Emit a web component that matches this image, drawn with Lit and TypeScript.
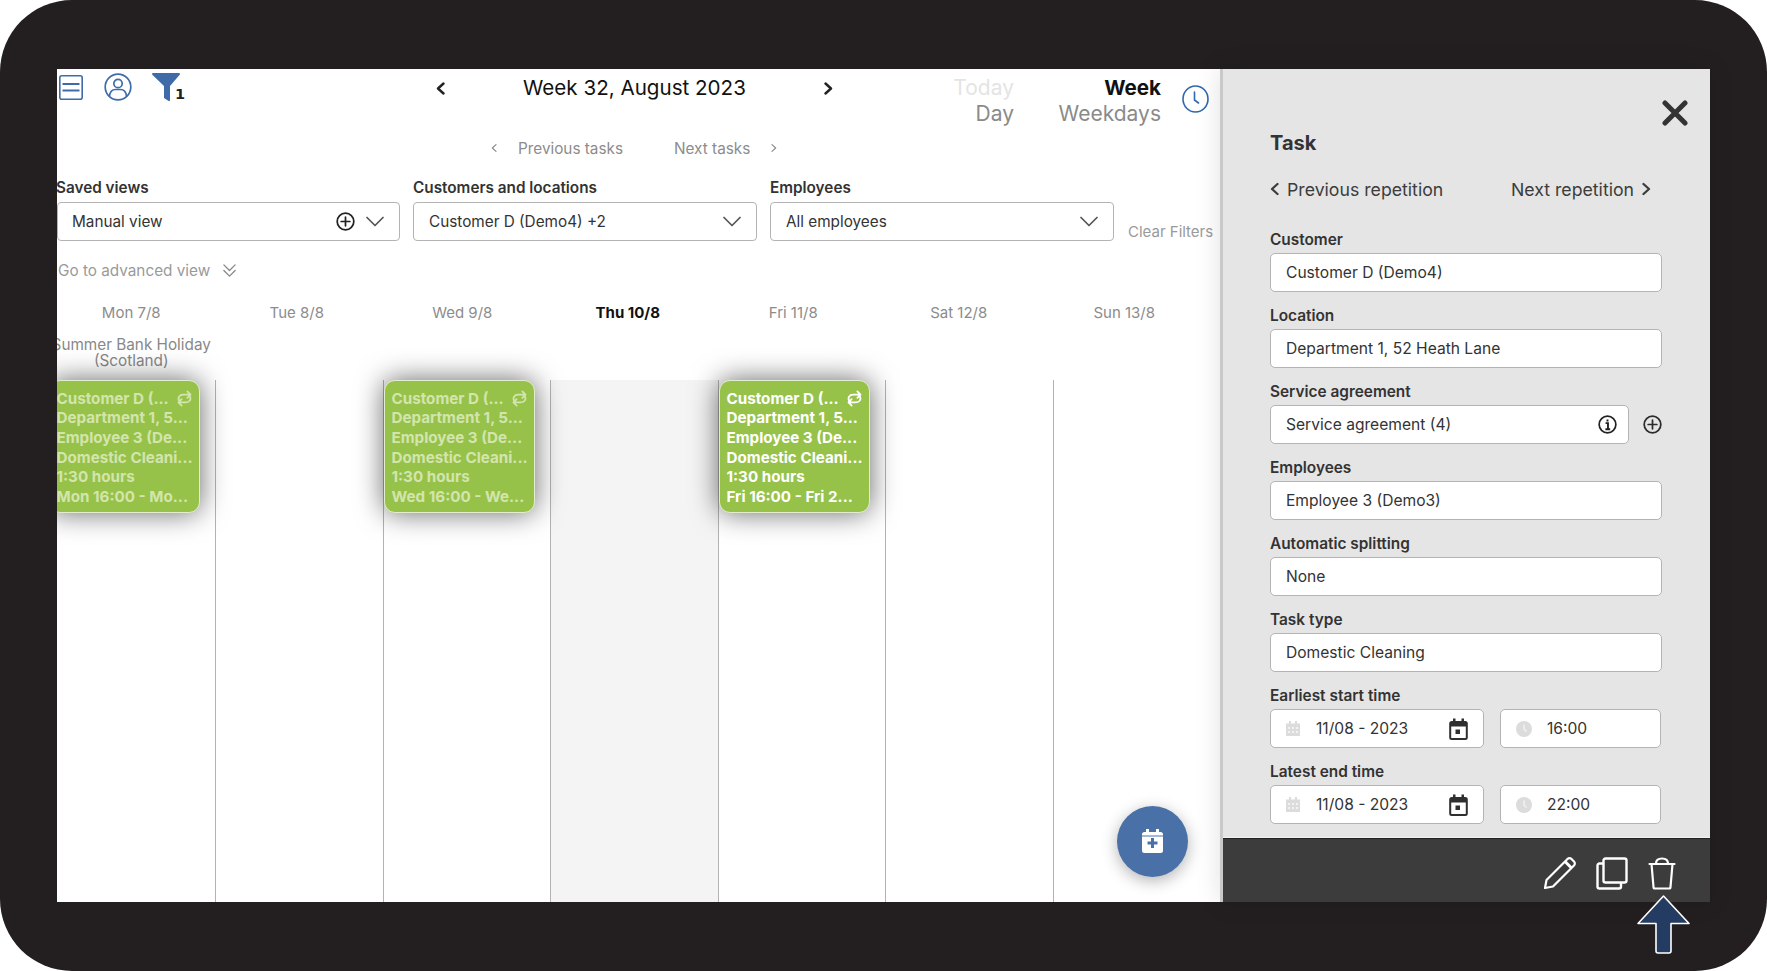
import { LitElement, html, css } from "lit";
import { customElement } from "lit/decorators.js";

const chev = (dir: "l" | "r" | "d", cls = "") => {
  if (dir === "d") {
    return html`<svg class=${cls} viewBox="0 0 18 11" fill="none" stroke="currentColor" stroke-linecap="round" stroke-linejoin="round"><path d="M1 1.500l8 8 8-8"></path></svg>`;
  }
  return html`<svg class=${cls} viewBox="0 0 9 13" fill="none" stroke="currentColor" stroke-linecap="round" stroke-linejoin="round"><path d=${dir === "l" ? "M7.500 1.500 2 6.500l5.500 5" : "M1.500 1.500 7 6.500l-5.500 5"}></path></svg>`;
};

const plus = (cls: string) => html`<svg class=${cls} viewBox="0 0 24 24" fill="none" stroke="currentColor" stroke-width="2.200" stroke-linecap="round"><circle cx="12" cy="12" r="10.500"></circle><path d="M12 6.500v11M6.500 12h11"></path></svg>`;

const repeat = html`<svg class="rep" viewBox="0 0 24 24" fill="none" stroke="currentColor" stroke-width="2.500" stroke-linecap="round" stroke-linejoin="round">
  <path d="M5 16C1.500 11 5 6.500 10 6.500h10.500M16 2l4.500 4.500L16 11"></path><path d="M19 8c3.500 5 0 9.500-5 9.500H3.500M8 13l-4.500 4.500L8 22"></path></svg>`;

const calGrey = html`<svg class="ic-grey" viewBox="0 0 14 15" fill="#dcdcdc"><path d="M0 2.500h14V15H0zM3 0h2v3H3zM9 0h2v3H9z"></path><g fill="#f2f2f2"><rect x="2" y="6" width="2" height="2"></rect><rect x="6" y="6" width="2" height="2"></rect><rect x="10" y="6" width="2" height="2"></rect><rect x="2" y="10" width="2" height="2"></rect><rect x="6" y="10" width="2" height="2"></rect><rect x="10" y="10" width="2" height="2"></rect></g></svg>`;
const calDark = html`<svg class="ic-cal" viewBox="0 0 19 22" fill="none"><path d="M1.200 5.500a1.500 1.500 0 0 1 1.500-1.500h13.600a1.500 1.500 0 0 1 1.500 1.500v14a1.500 1.500 0 0 1-1.500 1.500H2.700a1.500 1.500 0 0 1-1.500-1.500z" stroke="#2f2f2f" stroke-width="2"></path><path d="M1 4h17v4.500H1zM4 0.500h2.500V5H4zM12.500 0.500H15V5h-2.500zM6.500 11.500h4.500V16H6.500z" fill="#2f2f2f"></path></svg>`;
const clockGrey = html`<svg class="ic-clock" viewBox="0 0 16 16"><circle cx="8" cy="8" r="8" fill="#dcdcdc"></circle><path d="M8 3.500V8l2.500 2.500" fill="none" stroke="#f4f4f4" stroke-width="1.300"></path></svg>`;

interface CardData { day: string; last: string; active?: boolean; }
const cards: (CardData | null)[] = [
  { day: "Mon", last: "Mon 16:00 - Mo..." },
  null,
  { day: "Wed", last: "Wed 16:00 - We..." },
  null,
  { day: "Fri", last: "Fri 16:00 - Fri 2...", active: true },
  null,
  null,
];
const days = ["Mon 7/8", "Tue 8/8", "Wed 9/8", "Thu 10/8", "Fri 11/8", "Sat 12/8", "Sun 13/8"];

@customElement("app-root")
export class AppRoot extends LitElement {
  static styles = css`
    :host { display: block; width: 1767px; height: 971px; background: #fff; font-family: "Inter", "Noto Sans", sans-serif; color: #333; overflow: hidden; }
    * { box-sizing: border-box; }
    svg { display: block; flex: none; }
    .frame { position: relative; width: 1767px; height: 971px; background: #231f20; border-radius: 72px; padding: 69px 57px 69px 57px; }
    .screen { display: flex; height: 833px; width: 1653px; background: #fff; }
    .main { position: relative; width: 1163px; height: 833px; overflow: hidden; background: #fff; flex: none; }
    .top { display: flex; height: 58px; align-items: flex-start; }
    .icons { display: flex; width: 150px; height: 58px; padding: 4px 0 0 2px; position: relative; }
    .ham { width: 24px; height: 25px; margin-top: 2px; color: #3f6ca8; }
    .user { width: 28px; height: 28px; margin-left: 21px; color: #3f6ca8; }
    .filter { width: 28px; height: 28px; margin-left: 20px; }
    .badge { position: absolute; left: 118px; top: 17px; font-family: "DejaVu Sans", sans-serif; font-size: 14.500px; font-weight: 700; color: #222; }
    .nav { display: flex; align-items: center; width: 397px; margin-left: 229px; height: 38px; }
    .nav svg { width: 9px; height: 13px; stroke-width: 2.400; color: #222; }
    .nav .tt { font-size: 20.600px; color: #111; white-space: nowrap; text-align: center; flex: 1; margin-top: -1px; }
    .sw { display: grid; grid-template-columns: 118px 147px; justify-items: end; font-size: 21px; line-height: 26px; color: #8a8a8a; padding-top: 6px; margin-left: 63px; }
    .sw .off { color: #e4e4e4; }
    .sw .on { color: #111; font-weight: 700; font-size: 20.600px; }
    .clk { width: 27px; height: 28px; margin: 16px 0 0 21px; color: #3068ad; }

    .pager { display: flex; height: 42px; align-items: center; font-size: 15.300px; color: #8c8c8c; }
    .pager svg { width: 6px; height: 10px; stroke-width: 1.800; }
    .pager .a { margin-left: 434px; }
    .pager .pt { margin-left: 21px; width: 156px; white-space: nowrap; }
    .pager .nt { width: 97px; white-space: nowrap; }

    .filters { display: flex; gap: 13px; margin-top: 7px; height: 65px; }
    .fl { width: 344px; }
    .fl.first { margin-left: -1px; }
    .fl label { display: block; font-size: 15.300px; font-weight: 600; color: #333; height: 26px; line-height: 24px; white-space: nowrap; }
    .sel { display: flex; align-items: center; height: 39px; border: 1.500px solid #b4b4b4; border-radius: 4px; padding: 0 15px 0 15px; font-size: 15.300px; color: #333; background: #fff; }
    .fl.first .sel { margin-left: 1px; padding-left: 14px; }
    .sel span { flex: 1; white-space: nowrap; }
    .sel .dn { width: 18px; height: 11px; stroke-width: 1.700; color: #555; }
    .sel .pl { width: 19px; height: 19px; color: #222; margin-right: 11px; }
    .clear { font-size: 15px; color: #9a9a9a; margin: 46px 0 0 1px; white-space: nowrap; }

    .adv { display: flex; align-items: center; height: 20px; margin-top: 19px; font-size: 15.300px; color: #9a9a9a; padding-left: 1px; }
    .adv svg { width: 15px; height: 15px; margin-left: 12px; color: #888; }

    .heads { display: grid; grid-template-columns: repeat(7, 165.500px); margin: 24px 0 0 -8.500px; font-size: 15px; color: #8c8c8c; text-align: center; height: 18px; line-height: 18px; }
    .heads .today { color: #111; font-weight: 700; }
    .hol { width: 165.500px; margin: 15px 0 0 -8.500px; height: 32px; font-size: 15.300px; line-height: 16px; text-align: center; color: #888; white-space: nowrap; }

    .grid { display: grid; grid-template-columns: repeat(7, 167.500px); margin: 11px 0 0 -8.500px; height: 522px; }
    .col { border-right: 1.500px solid #b3b3b3; height: 100%; }
    .col.today { background: #f4f4f4; }
    .col:last-child { border-right: none; }
    .card { width: 151px; height: 133px; background: #96c249; border: 1.500px solid #e3eccf; border-radius: 11px; box-shadow: 0 0 28px rgba(0,0,0,.6); padding: 7.500px 6px 0 7px; color: #d3e5ad; font-size: 15.200px; font-weight: 700; line-height: 19.700px; white-space: nowrap; position: relative; overflow: hidden; }
    .card.active { color: #fff; }
    .card .r1 { display: flex; justify-content: space-between; align-items: center; }
    .rep { width: 17px; height: 17px; }

    .fab { position: absolute; left: 1059.500px; top: 737px; width: 71px; height: 71px; border-radius: 50%; background: #4a70a8; box-shadow: 0 4px 16px rgba(0,0,0,.3); display: flex; align-items: center; justify-content: center; }
    .fab svg { width: 21px; height: 24px; margin-top: -2px; }

    .panel { position: relative; width: 490px; height: 833px; background: #e5e5e5; border-left: 3px solid #c9c9c9; box-shadow: 0 0 24px rgba(0,0,0,.12); flex: none; display: flex; flex-direction: column; }
    .pbody { flex: 1; padding: 0 0 0 47px; position: relative; }
    .x { position: absolute; right: 22px; top: 31px; width: 26px; height: 26px; }
    .ptitle { font-size: 20px; font-weight: 700; color: #333; margin-top: 61px; height: 26px; line-height: 26px; }
    .rep-nav { display: flex; align-items: center; height: 24px; margin-top: 21px; font-size: 17.700px; color: #3c3c3c; white-space: nowrap; }
    .rep-nav svg { width: 9px; height: 14px; stroke-width: 2.300; }
    .rep-nav .p { margin-left: 8px; width: 224px; }
    .rep-nav .n { width: 131px; }
    .rows { margin-top: 26px; }
    .field { height: 76px; }
    .field label { display: block; height: 26px; line-height: 26px; font-size: 15.400px; font-weight: 600; color: #333; white-space: nowrap; }
    .inp { display: flex; align-items: center; width: 392px; height: 39px; background: #fff; border: 1.500px solid #b4b4b4; border-radius: 5px; padding-left: 15px; font-size: 15.600px; color: #333; white-space: nowrap; }
    .row { display: flex; align-items: center; }
    .inp.sa { width: 359px; padding-right: 11px; justify-content: space-between; }
    .info { width: 19px; height: 19px; }
    .addp { width: 19px; height: 19px; margin-left: 14px; color: #2b2b2b; }
    .date { width: 214px; padding-left: 15px; }
    .date .tx { margin-left: 16px; flex: 1; }
    .ic-grey { width: 14px; height: 15px; }
    .ic-cal { width: 19px; height: 22px; margin-right: 15px; }
    .time { width: 161px; margin-left: 16px; padding-left: 15px; }
    .time .tx { margin-left: 15px; }
    .ic-clock { width: 16px; height: 16px; }
    .foot { height: 64px; flex: none; background: #3c3c3c; border-top: 1.500px solid #222; box-shadow: 0 -1px 0 #f2f2f2; display: flex; justify-content: flex-end; padding: 18px 34px 0 0; gap: 20px; }
    .foot svg { height: 33px; }
    .arrow { position: absolute; left: 1637px; top: 895px; width: 53px; height: 59px; }
  `;

  render() {
    return html`<div class="frame">
      <div class="screen">
        <div class="main">
          <div class="top">
            <div class="icons">
              <svg class="ham" viewBox="0 0 24 25" fill="none" stroke="currentColor" stroke-width="1.600"><rect x=".8" y=".8" width="22.400" height="23.400" rx="2"></rect><path d="M3.500 9h17M3.500 15.500h17" stroke-width="2"></path></svg>
              <svg class="user" viewBox="0 0 28 28" fill="none" stroke="currentColor" stroke-width="1.700"><circle cx="14" cy="14" r="12.800"></circle><circle cx="14" cy="10.500" r="4.200"></circle><path d="M5.500 23c.5-4 3-6.500 6-6.500h5c3 0 5.500 2.500 6 6.500"></path></svg>
              <svg class="filter" viewBox="0 0 28 28" fill="#3f6ca8"><path d="M1 0h26a1 1 0 0 1 .7 1.700L18 13v14a1 1 0 0 1-1.400.9L12 25V13L.3 1.700A1 1 0 0 1 1 0z"></path></svg>
              <span class="badge">1</span>
            </div>
            <div class="nav">${chev("l")}<span class="tt">Week 32, August 2023</span>${chev("r")}</div>
            <div class="sw">
              <span class="off">Today</span><span class="on">Week</span>
              <span>Day</span><span>Weekdays</span>
            </div>
            <svg class="clk" viewBox="0 0 27 28" fill="none" stroke="currentColor" stroke-width="1.600" stroke-linecap="round"><ellipse cx="13.500" cy="14" rx="12.500" ry="13"></ellipse><path d="M12.500 7v8l4 3"></path></svg>
          </div>
          <div class="pager">
            <span class="a">${chev("l")}</span><span class="pt">Previous tasks</span>
            <span class="nt">Next tasks</span>${chev("r")}
          </div>
          <div class="filters">
            <div class="fl first"><label>Saved views</label><div class="sel"><span>Manual view</span>${plus("pl")}${chev("d", "dn")}</div></div>
            <div class="fl"><label>Customers and locations</label><div class="sel"><span>Customer D (Demo4) +2</span>${chev("d", "dn")}</div></div>
            <div class="fl"><label>Employees</label><div class="sel"><span>All employees</span>${chev("d", "dn")}</div></div>
            <div class="clear">Clear Filters</div>
          </div>
          <div class="adv">Go to advanced view
            <svg viewBox="0 0 16 16" fill="none" stroke="currentColor" stroke-width="1.400" stroke-linecap="round" stroke-linejoin="round"><path d="M2 2l6 6 6-6M2 8l6 6 6-6"></path></svg>
          </div>
          <div class="heads">${days.map((d, i) => html`<div class=${i === 3 ? "today" : ""}>${d}</div>`)}</div>
          <div class="hol">Summer Bank Holiday<br />(Scotland)</div>
          <div class="grid">
            ${cards.map((c, i) => html`<div class="col ${i === 3 ? "today" : ""}">
              ${c ? html`<div class="card ${c.active ? "active" : ""}">
                <div class="r1"><span>Customer D (...</span>${repeat}</div>
                <div>Department 1, 5...</div><div>Employee 3 (De...</div><div>Domestic Cleani...</div><div>1:30 hours</div><div>${c.last}</div>
              </div>` : ""}
            </div>`)}
          </div>
          <div class="fab"><svg viewBox="0 0 21 24" fill="#fff"><path fill-rule="evenodd" d="M4 0h3v3h7V0h3v3h1.500A2.500 2.500 0 0 1 21 5.500v16a2.500 2.500 0 0 1-2.500 2.500h-16A2.500 2.500 0 0 1 0 21.500v-16A2.500 2.500 0 0 1 2.500 3H4zM9 9v3.500H5.500v3H9V19h3v-3.500h3.500v-3H12V9zM0 6.500v1h21v-1z"></path></svg></div>
        </div>
        <div class="panel">
          <div class="pbody">
            <svg class="x" viewBox="0 0 26 26" fill="none" stroke="#333" stroke-width="5" stroke-linecap="round"><path d="M3 3l20 20M23 3 3 23"></path></svg>
            <div class="ptitle">Task</div>
            <div class="rep-nav">${chev("l")}<span class="p">Previous repetition</span><span class="n">Next repetition</span>${chev("r")}</div>
            <div class="rows">
              <div class="field"><label>Customer</label><div class="inp">Customer D (Demo4)</div></div>
              <div class="field"><label>Location</label><div class="inp">Department 1, 52 Heath Lane</div></div>
              <div class="field"><label>Service agreement</label><div class="row"><div class="inp sa"><span>Service agreement (4)</span>
                <svg class="info" viewBox="0 0 20 20" fill="none" stroke="#222" stroke-width="1.800"><circle cx="10" cy="10" r="8.800"></circle><path d="M8 8.500h2.500V15M7.800 15h5M10 4.700v2.200" stroke-width="2"></path></svg></div>${plus("addp")}</div></div>
              <div class="field"><label>Employees</label><div class="inp">Employee 3 (Demo3)</div></div>
              <div class="field"><label>Automatic splitting</label><div class="inp">None</div></div>
              <div class="field"><label>Task type</label><div class="inp">Domestic Cleaning</div></div>
              <div class="field"><label>Earliest start time</label><div class="row"><div class="inp date">${calGrey}<span class="tx">11/08 - 2023</span>${calDark}</div><div class="inp time">${clockGrey}<span class="tx">16:00</span></div></div></div>
              <div class="field"><label>Latest end time</label><div class="row"><div class="inp date">${calGrey}<span class="tx">11/08 - 2023</span>${calDark}</div><div class="inp time">${clockGrey}<span class="tx">22:00</span></div></div></div>
            </div>
          </div>
          <div class="foot">
            <svg viewBox="0 0 33 33" width="33" fill="none" stroke="#fff" stroke-width="2.200" stroke-linejoin="round"><path d="M2 31l1.500-8L24.500 2a2.800 2.800 0 0 1 4 0l2.500 2.500a2.800 2.800 0 0 1 0 4L10 29.500z"></path><path d="M22 4.500l6.500 6.500" stroke-width="3"></path></svg>
            <svg viewBox="0 0 32 33" width="32" fill="none" stroke="#fff" stroke-width="2.400" stroke-linejoin="round"><rect x="7.500" y="1.500" width="23" height="24" rx="2"></rect><path d="M7 6.500H3.500a2 2 0 0 0-2 2v21a2 2 0 0 0 2 2H23a2 2 0 0 0 2-2v-4"></path></svg>
            <svg viewBox="0 0 28 33" width="28" fill="none" stroke="#fff" stroke-width="2.200" stroke-linejoin="round" stroke-linecap="round"><path d="M1.500 7h25M3.500 7l2 23a1.500 1.500 0 0 0 1.500 1.500h14a1.500 1.500 0 0 0 1.500-1.500l2-23M8 6.500C8 3 10.500 1.500 14 1.500S20 3 20 6.500"></path></svg>
          </div>
        </div>
      </div>
      <svg class="arrow" viewBox="0 0 53 59"><path d="M26.500 1 52 28.500H34V56a2 2 0 0 1-2 2H21a2 2 0 0 1-2-2V28.500H1z" fill="#243c62" stroke="#fff" stroke-width="1.600" stroke-linejoin="round"></path></svg>
    </div>`;
  }
}
